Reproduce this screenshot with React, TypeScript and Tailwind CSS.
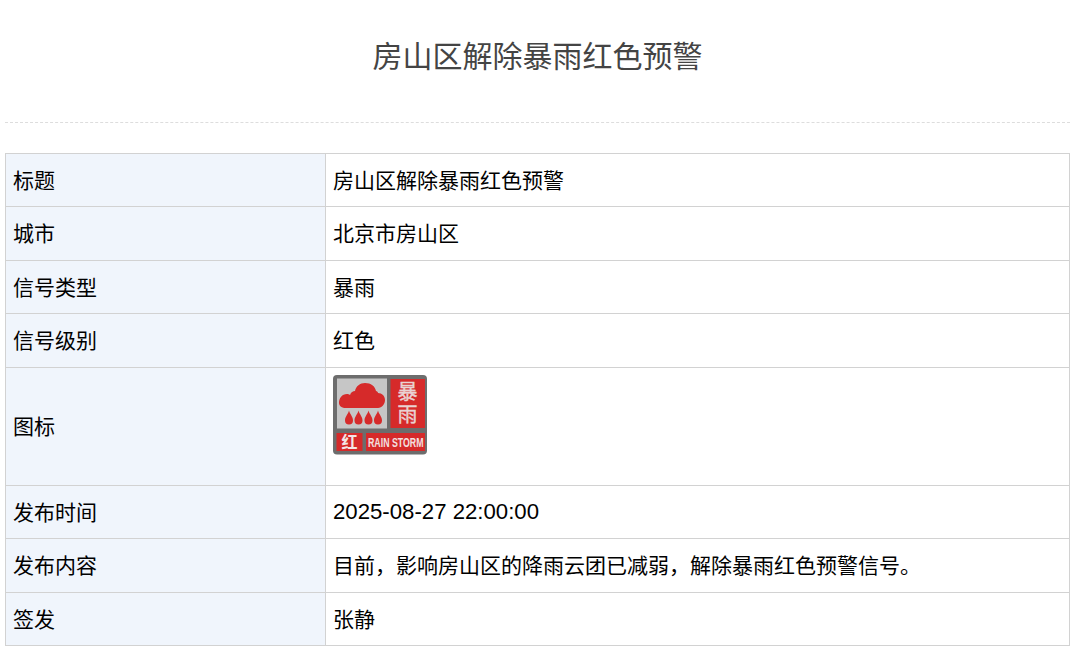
const rows: [string, string][] = [
  ['标题', '房山区解除暴雨红色预警'],
  ['城市', '北京市房山区'],
  ['信号类型', '暴雨'],
  ['信号级别', '红色'],
]

const bottomRows: [string, string][] = [
  ['发布时间', '2025-08-27 22:00:00'],
  ['发布内容', '目前，影响房山区的降雨云团已减弱，解除暴雨红色预警信号。'],
  ['签发', '张静'],
]

function RainStormIcon() {
  return (
    <svg viewBox="0 0 94 80" className="block h-[80px] w-[94px]" aria-label="暴雨红色预警">
      <rect x="0" y="0" width="94" height="79.5" rx="4" fill="#6d6d6d" />
      <rect x="4" y="3.5" width="50" height="50" fill="#c6c6c6" />
      <path
        d="M6 28c0-5 3-9 8-9 1 0 2 0 3 1 1-3 3-4 5-4 1-5 5-8 10-8 6 0 10 3 11 8 1 0 2 1 2 2 4 0 7 3 7 7 0 4-3 8-7 8H13c-4 0-7-2-7-5Z"
        fill="#d62a2a"
      />
      {[16, 25.5, 35.5, 45].map((x) => (
        <path
          key={x}
          d="M0 -9C1 -5 4 -3 4 1a4 4 0 0 1-8 0C-4 -3 -1 -5 0 -9Z"
          transform={`translate(${x} 44.5)`}
          fill="#d62a2a"
        />
      ))}
      <rect x="57.5" y="4" width="34.5" height="49" fill="#d62a2a" />
      <text x="74.5" y="23.5" textAnchor="middle" fontSize="20" stroke="#e9d2d2" strokeWidth="0.4" fill="#e9d2d2" fontFamily="'Noto Sans CJK SC', sans-serif">暴</text>
      <text x="74.5" y="47" textAnchor="middle" fontSize="20" stroke="#e9d2d2" strokeWidth="0.4" fill="#e9d2d2" fontFamily="'Noto Sans CJK SC', sans-serif">雨</text>
      <rect x="3.5" y="58" width="26" height="18" fill="#d62a2a" />
      <text x="16.5" y="73" textAnchor="middle" fontSize="16" fontWeight="700" fill="#f3e6e6" fontFamily="'Noto Sans CJK SC', sans-serif">红</text>
      <rect x="33" y="58" width="59" height="18" fill="#d62a2a" />
      <text transform="translate(35 71.5) scale(0.88 1.25)" fontSize="10" fontWeight="700" fill="#f3e0e0" fontFamily="'Liberation Sans', sans-serif">RAIN STORM</text>
    </svg>
  )
}

function Row({ label, children, tall }: { label: string; children: React.ReactNode; tall?: boolean }) {
  return (
    <tr className={tall ? 'h-[118px]' : 'h-[53.5px]'}>
      <td className="w-[320px] border border-[#d2d2d2] bg-[#f0f5fc] pb-[2px] pl-[7px] align-middle">{label}</td>
      <td className={`border border-[#d2d2d2] pl-[7px] ${tall ? 'pt-[7px] align-top' : 'pb-[2px] align-middle'}`}>{children}</td>
    </tr>
  )
}

export default function App() {
  return (
    <div className="w-[1075px] bg-white px-[5px] pb-[14px] font-['Microsoft_YaHei','Noto_Sans_CJK_SC',sans-serif] text-black">
      <h1 className="h-[123px] border-b border-dashed border-[#dddddd] pt-[32px] text-center text-[30px] font-normal leading-[44px] text-[#444444]">
        房山区解除暴雨红色预警
      </h1>
      <table className="mt-[29.6px] w-[1065px] border-collapse text-[21px] leading-[30px]">
        <tbody>
          {rows.map(([label, value]) => (
            <Row key={label} label={label}>{value}</Row>
          ))}
          <Row label="图标" tall>
            <RainStormIcon />
          </Row>
          {bottomRows.map(([label, value]) => (
            <Row key={label} label={label}>
              {label === '发布时间' ? (
                <span className="font-['Liberation_Sans',sans-serif] text-[22.2px]">{value}</span>
              ) : (
                value
              )}
            </Row>
          ))}
        </tbody>
      </table>
    </div>
  )
}
